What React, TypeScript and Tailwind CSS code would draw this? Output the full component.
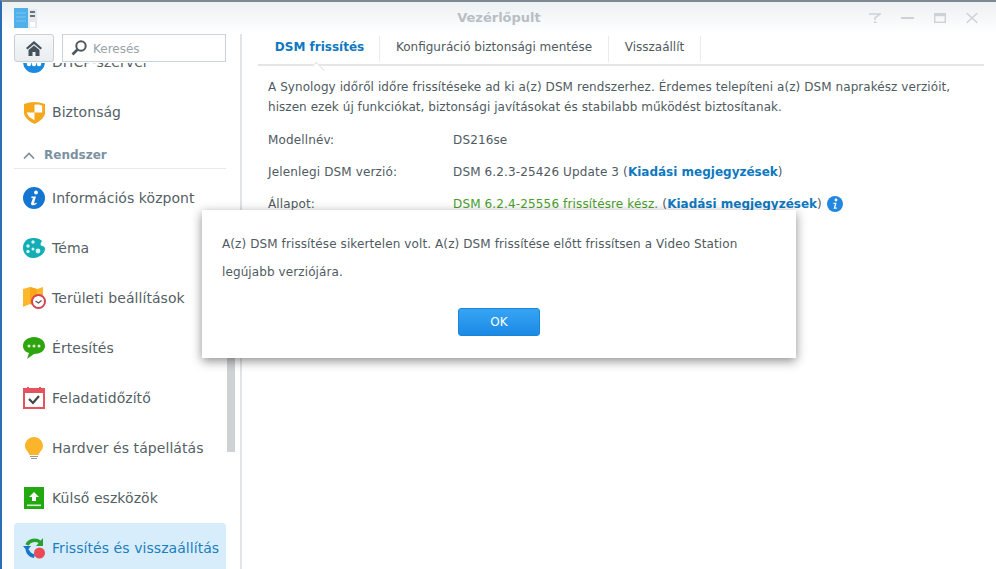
import React from 'react'

const font = { fontFamily: '"DejaVu Sans", sans-serif' }

const IconDhcp = () => (
    <svg width="22" height="22" viewBox="0 0 22 22"><circle cx="11" cy="11" r="11" fill="#1a8ae0" /><circle cx="6" cy="13" r="2.2" fill="#fff" /><circle cx="11" cy="13" r="2.2" fill="#fff" /><circle cx="16" cy="13" r="2.2" fill="#fff" /></svg>
)
const IconShield = () => (
    <svg width="23" height="23" viewBox="0 0 24 24"><path d="M1 3 Q12 -1 23 3 V13 Q22 19 12 24 Q2 19 1 13 Z" fill="#f5a81c" /><path d="M12 4 Q17 3 20 5 V12 H12 Z M12 12 V20 Q5 17 4 12 Z" fill="#fff" /></svg>
)
const IconInfo = () => (
    <svg width="22" height="22" viewBox="0 0 22 22"><circle cx="11" cy="11" r="11" fill="#1576d2" /><circle cx="13" cy="5.5" r="1.9" fill="#fff" /><path d="M8.5 9.5 H13 L11 16 Q11 17 13.5 15.5 L13.5 17 Q10.5 19 8.5 18 Q7.5 17 8.5 15 L10 11 H8.3 Z" fill="#fff" /></svg>
)
const IconPalette = () => (
    <svg width="22" height="20" viewBox="0 0 22 20"><path d="M10 0 C15 0 17 1 19 3 C17 6 17 7 19 8 C21 8 22 9 22 11 C22 15 17 20 10 20 C4 20 0 15 0 10 C0 4 4 0 10 0 Z" fill="#12adb5" /><circle cx="5" cy="8" r="1.7" fill="#d8f4f5" /><circle cx="10" cy="4" r="1.7" fill="#d8f4f5" /><circle cx="5" cy="13.5" r="1.7" fill="#d8f4f5" /><circle cx="10" cy="11" r="1.5" fill="#d8f4f5" /><circle cx="15" cy="13" r="2.4" fill="#d8f4f5" /></svg>
)
const IconMapClock = () => (
    <svg width="23" height="22" viewBox="0 0 23 22"><path d="M0 2 L7 0 L14 2 L20 0 V14 L14 19 L7 17 L0 20 Z" fill="#fbb82d" /><path d="M7 0 V17 L14 19 V2 Z" fill="#f9a61a" /><circle cx="15.5" cy="14.5" r="6.5" fill="#fff" stroke="#d9424f" strokeWidth="2" /><path d="M12.5 14 L15.5 16 L18.5 13.5" fill="none" stroke="#555" strokeWidth="1.2" /></svg>
)
const IconChat = () => (
    <svg width="22" height="22" viewBox="0 0 22 22"><path d="M11 0 C17 0 22 3.5 22 9 C22 14 17 17 11 17 L4 22 L6 16 C2 15 0 12 0 9 C0 3.5 5 0 11 0 Z" fill="#2ea50f" /><circle cx="6" cy="9" r="1.5" fill="#d9f4d0" /><circle cx="11" cy="9" r="1.5" fill="#d9f4d0" /><circle cx="16" cy="9" r="1.5" fill="#d9f4d0" /></svg>
)
const IconCalendar = () => (
    <svg width="22" height="22" viewBox="0 0 22 22"><rect x="0" y="1" width="22" height="21" fill="#e5535f" /><rect x="2" y="6" width="18" height="14" fill="#fff" /><rect x="4" y="0" width="2" height="3" fill="#e5535f" /><rect x="16" y="0" width="2" height="3" fill="#e5535f" /><path d="M6 12 L10 16 L16 9" fill="none" stroke="#444" strokeWidth="2.2" /></svg>
)
const IconBulb = () => (
    <svg width="18" height="23" viewBox="0 0 18 23"><path d="M9 0 C14 0 18 4 18 9 C18 13 14 15 13.5 18 H4.5 C4 15 0 13 0 9 C0 4 4 0 9 0 Z" fill="#fbb52a" /><rect x="5" y="19" width="8" height="1" fill="#999" /><rect x="6" y="21" width="6" height="1" fill="#999" /></svg>
)
const IconUpload = () => (
    <svg width="20" height="22" viewBox="0 0 20 22"><rect width="20" height="22" fill="#22a90f" /><path d="M10 5 L15 10 H12 V14 H8 V10 H5 Z" fill="#fff" /><rect x="3" y="17.5" width="14" height="1.6" fill="#d5f1cf" /></svg>
)
const IconUpdate = () => (
    <svg width="23" height="22" viewBox="0 0 23 22">
        <path d="M4 8 C6 3 13 2 17 5" fill="none" stroke="#2aa12e" strokeWidth="3.4" />
        <path d="M20 1 V9 H13 Z" fill="#2aa12e" />
        <path d="M0 9 H8 L5.5 12 C7 15 9 17 12 17.5 L11 21 C6 20 3 17 2.5 12 Z" fill="#1677c9" />
        <circle cx="16.5" cy="16" r="5.5" fill="#ea4a55" />
    </svg>
)

const SideItem = ({ icon, label, active }: { icon: React.ReactNode, label: string, active?: boolean }) => (
    <div className={`flex items-center h-[50px] rounded-sm ${active ? 'bg-[#d8edfc] text-[#1c7fbd]' : 'text-[#555f66]'}`}>
        <div className="w-[38px] flex justify-center shrink-0 pl-[2px]">{icon}</div>
        <span className="text-[14px] whitespace-nowrap tracking-[0.06px]">{label}</span>
    </div>
)

export default function App() {
    return (
        <div className="relative w-[996px] h-[569px] overflow-hidden bg-white flex flex-col border-t-2 border-t-[#7d8a91] border-l-2 border-l-[#2a6db5] text-[#4f5a61]" style={font}>
            {/* title bar */}
            <div className="h-[32px] shrink-0 flex items-center justify-between pl-[12px] pr-[18px] bg-gradient-to-b from-[#edf0f3] to-white relative">
                <svg width="25" height="21" viewBox="0 0 25 21"><rect width="14" height="20" fill="#4fb0ea" /><path d="M2 5 H12 M2 9 H12 M2 13 H12" stroke="#7cc6f2" strokeWidth="1" /><rect x="14" y="1" width="9" height="19" fill="#e4e9ec" /><rect x="16" y="3" width="5" height="2" fill="#66737b" /><rect x="16" y="7" width="5" height="2" fill="#66737b" /><rect x="16" y="14" width="5" height="5" fill="#fff" /></svg>
                <span className="absolute inset-x-0 text-center text-[13px] font-bold text-[#b7bfc4]">Vezérlőpult</span>
                <div className="flex items-center gap-[20px]">
                    <svg width="12" height="10" viewBox="0 0 12 10"><path d="M0 1 H12 M11 1 L6 5 V7" fill="none" stroke="#ccd2d6" strokeWidth="1.6" /><rect x="5" y="8.5" width="2.5" height="1.5" fill="#ccd2d6" /></svg>
                    <svg width="13" height="10" viewBox="0 0 13 10"><rect y="4" width="13" height="2" fill="#ccd2d6" /></svg>
                    <svg width="12" height="10" viewBox="0 0 12 10"><rect x="0.7" y="0.7" width="10.6" height="8.6" fill="none" stroke="#ccd2d6" strokeWidth="1.4" /><rect x="0.7" y="0.7" width="10.6" height="2.5" fill="#ccd2d6" /></svg>
                    <svg width="12" height="10" viewBox="0 0 12 10"><path d="M0.5 0 L11.5 10 M11.5 0 L0.5 10" stroke="#ccd2d6" strokeWidth="1.5" /></svg>
                </div>
            </div>

            <div className="flex-1 flex min-h-0">
                {/* sidebar */}
                <div className="w-[240px] shrink-0 border-r-2 border-r-[#e1e4e6] flex flex-col relative">
                    <div className="h-[29px] shrink-0 ml-[12px] flex gap-[8px] relative z-10 bg-white">
                        <div className="w-[40px] h-[28px] rounded-[3px] border border-[#c8d0d5] bg-gradient-to-b from-[#f7f9fa] to-[#e9edf0] flex items-center justify-center">
                            <svg width="16" height="15" viewBox="0 0 16 15"><path d="M8 0 L16 7 L14.5 8.5 L8 3 L1.5 8.5 L0 7 Z M2.5 9 L8 4.5 L13.5 9 V15 H9.5 V11 H6.5 V15 H2.5 Z" fill="#47535a" /></svg>
                        </div>
                        <div className="w-[164px] h-[28px] border border-[#c8d5da] flex items-center pl-[8px] gap-[6px]">
                            <svg width="16" height="16" viewBox="0 0 16 16"><circle cx="10" cy="6" r="4.7" fill="none" stroke="#4d585e" strokeWidth="2" /><path d="M6.5 9.5 L1.5 14.5" stroke="#4d585e" strokeWidth="2.6" /></svg>
                            <span className="text-[12px] text-[#9aa3a8] pt-[2px]">Keresés</span>
                        </div>
                    </div>
                    <div className="flex-1 min-h-0 overflow-hidden pl-[12px] pr-[14px]">
                        <div className="-mt-[26px]">
                            <SideItem icon={<IconDhcp />} label="DHCP-szerver" />
                            <SideItem icon={<IconShield />} label="Biztonság" />
                            <div className="h-[32px] mb-[4px] pt-[5px] border-b border-b-[#e8ebed] flex items-center pl-[9px] gap-[9px]">
                                <svg width="12" height="7" viewBox="0 0 12 7"><path d="M1 6.5 L6 1.5 L11 6.5" fill="none" stroke="#7d8c96" strokeWidth="1.6" /></svg>
                                <span className="text-[12px] font-bold text-[#7b91a1]">Rendszer</span>
                            </div>
                            <SideItem icon={<IconInfo />} label="Információs központ" />
                            <SideItem icon={<IconPalette />} label="Téma" />
                            <SideItem icon={<IconMapClock />} label="Területi beállítások" />
                            <SideItem icon={<IconChat />} label="Értesítés" />
                            <SideItem icon={<IconCalendar />} label="Feladatidőzítő" />
                            <SideItem icon={<IconBulb />} label="Hardver és tápellátás" />
                            <SideItem icon={<IconUpload />} label="Külső eszközök" />
                            <SideItem icon={<IconUpdate />} label="Frissítés és visszaállítás" active />
                        </div>
                    </div>
                    {/* scrollbar thumb */}
                    <div className="absolute left-[225px] top-[200px] w-[8px] h-[218px] bg-[#cfd2d4]" />
                </div>

                {/* content */}
                <div className="flex-1 min-w-0 pl-[16px] pr-[12px]">
                    <div className="h-[32px] border-b-2 border-b-[#e3e5e7] flex items-stretch text-[12px] relative">
                        <div className="w-[122px] flex items-center justify-center pb-[4px] font-bold text-[#0e78c0] border-r border-r-[#e8eaec] my-[2px] pl-[2px]">DSM frissítés</div>
                        <div className="w-[229px] flex items-center justify-center pb-[4px] border-r border-r-[#e8eaec] my-[2px] whitespace-nowrap">Konfiguráció biztonsági mentése</div>
                        <div className="w-[92px] flex items-center justify-center pb-[4px] border-r border-r-[#e8eaec] my-[2px]">Visszaállít</div>
                        <div className="absolute left-[54px] bottom-[-2px] w-[12px] h-[6px] bg-white border-l border-t border-[#e3e5e7] rotate-45 origin-bottom-left" />
                    </div>
                    <div className="pl-[10px] pt-[11px] text-[12px] text-[#4f5a61]">
                        <p className="leading-[20px] whitespace-nowrap tracking-[0.07px]">A Synology időről időre frissítéseke ad ki a(z) DSM rendszerhez. Érdemes telepíteni a(z) DSM naprakész verzióit,</p>
                        <p className="leading-[20px] whitespace-nowrap tracking-[0.05px]">hiszen ezek új funkciókat, biztonsági javításokat és stabilabb működést biztosítanak.</p>
                        <div className="mt-[7px] flex h-[32px] items-center tracking-[0.14px]">
                            <span className="w-[185px]">Modellnév:</span><span>DS216se</span>
                        </div>
                        <div className="flex h-[32px] items-center tracking-[0.14px]">
                            <span className="w-[185px]">Jelenlegi DSM verzió:</span>
                            <span>DSM 6.2.3-25426 Update 3 (<b className="text-[#0e78c0] tracking-normal">Kiadási megjegyzések</b>)</span>
                        </div>
                        <div className="flex h-[32px] items-center tracking-[0.14px]">
                            <span className="w-[185px]">Állapot:</span>
                            <span className="text-[#4a9e2a]">DSM 6.2.4-25556 frissítésre kész.</span>
                            <span className="ml-[4px]">(<b className="text-[#0e78c0] tracking-normal">Kiadási megjegyzések</b>)</span>
                            <svg className="ml-[5px]" width="16" height="16" viewBox="0 0 16 16"><circle cx="8" cy="8" r="8" fill="#2187df" /><circle cx="9" cy="4" r="1.4" fill="#fff" /><path d="M6.5 6.8 H9.6 L8.3 11.6 H9.8 V12.8 H6.6 L7.9 8 H6.5 Z" fill="#fff" /></svg>
                        </div>
                    </div>
                </div>
            </div>

            {/* dialog */}
            <div className="absolute left-[200px] top-[208px] w-[594px] h-[148px] bg-white shadow-[0_3px_10px_rgba(0,0,0,0.45)] flex flex-col px-[20px]">
                <div className="pt-[20px] text-[12px] leading-[28px] text-[#4f5a61] tracking-[0.1px]">
                    <p className="whitespace-nowrap">A(z) DSM frissítése sikertelen volt. A(z) DSM frissítése előtt frissítsen a Video Station</p>
                    <p>legújabb verziójára.</p>
                </div>
                <div className="flex justify-center mt-[22px]">
                    <button className="w-[82px] h-[28px] rounded-[3px] border border-[#1a86d8] bg-gradient-to-b from-[#36a4f3] to-[#1b8ae6] text-[12px] text-white">OK</button>
                </div>
            </div>
        </div>
    )
}
